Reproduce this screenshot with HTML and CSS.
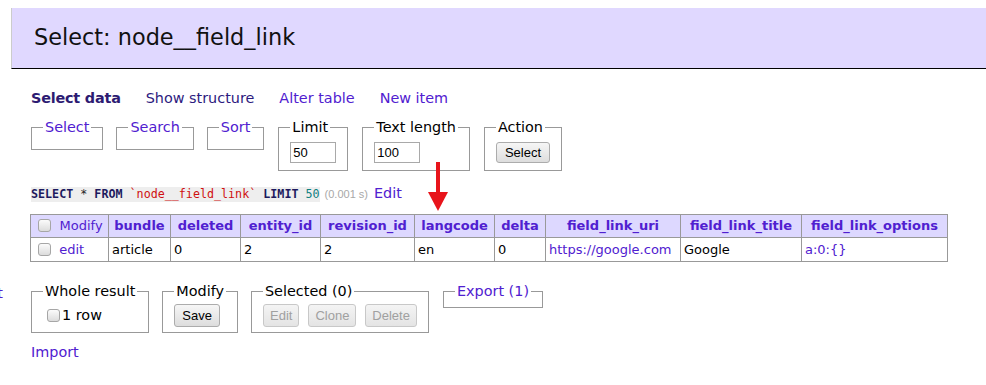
FILE: index.html
```html
<!DOCTYPE html>
<html lang="en">
<head>
    <meta charset="UTF-8">
    <title>Select: node__field_link - Adminer</title>
    <link rel="stylesheet" href="styles.css">
</head>
<body>
    <div class="page">
        <aside class="sidebar">
            <a href="#" class="side-link">Export</a>
        </aside>

        <main class="content">
            <h2 class="title">Select: node__field_link</h2>

            <p class="links">
                <a href="#" class="active">Select data</a>
                <a href="#" class="visited">Show structure</a>
                <a href="#">Alter table</a>
                <a href="#">New item</a>
            </p>

            <form class="filters">
                <fieldset><legend><a href="#">Select</a></legend></fieldset>
                <fieldset><legend><a href="#">Search</a></legend></fieldset>
                <fieldset><legend><a href="#">Sort</a></legend></fieldset>
                <fieldset class="wide-gap">
                    <legend>Limit</legend>
                    <input type="text" class="small-input" value="50">
                </fieldset>
                <fieldset class="wide-gap">
                    <legend>Text length</legend>
                    <input type="text" class="small-input" value="100">
                </fieldset>
                <fieldset class="wide-gap">
                    <legend>Action</legend>
                    <button type="button" class="btn">Select</button>
                </fieldset>
            </form>

            <p class="query">
                <code class="sql"><b class="kw">SELECT</b> * <b class="kw">FROM</b> <span class="ident">`node__field_link`</span> <b class="kw">LIMIT</b> <span class="num">50</span></code>
                <span class="time">(0.001 s)</span>
                <a href="#">Edit</a>
            </p>

            <table class="results">
                <colgroup>
                    <col class="c-modify">
                    <col class="c-bundle">
                    <col class="c-deleted">
                    <col class="c-entity">
                    <col class="c-revision">
                    <col class="c-lang">
                    <col class="c-delta">
                    <col class="c-uri">
                    <col class="c-title">
                    <col class="c-options">
                </colgroup>
                <thead>
                    <tr>
                        <th class="check-col"><input type="checkbox" class="check"> <a href="#" class="plain">Modify</a></th>
                        <th><a href="#">bundle</a></th>
                        <th><a href="#">deleted</a></th>
                        <th><a href="#">entity_id</a></th>
                        <th><a href="#">revision_id</a></th>
                        <th><a href="#">langcode</a></th>
                        <th><a href="#">delta</a></th>
                        <th><a href="#">field_link_uri</a></th>
                        <th><a href="#">field_link_title</a></th>
                        <th><a href="#">field_link_options</a></th>
                    </tr>
                </thead>
                <tbody>
                    <tr>
                        <td class="check-col"><input type="checkbox" class="check"> <a href="#">edit</a></td>
                        <td>article</td>
                        <td>0</td>
                        <td>2</td>
                        <td>2</td>
                        <td>en</td>
                        <td>0</td>
                        <td><a href="#">https://google.com</a></td>
                        <td>Google</td>
                        <td><a href="#">a:0:{}</a></td>
                    </tr>
                </tbody>
            </table>

            <div class="actions">
                <fieldset>
                    <legend>Whole result</legend>
                    <label class="row-count"><input type="checkbox" class="check">1 row</label>
                </fieldset>
                <fieldset>
                    <legend>Modify</legend>
                    <button type="button" class="btn">Save</button>
                </fieldset>
                <fieldset>
                    <legend>Selected (0)</legend>
                    <div class="btn-row">
                        <button type="button" class="btn" disabled>Edit</button>
                        <button type="button" class="btn" disabled>Clone</button>
                        <button type="button" class="btn" disabled>Delete</button>
                    </div>
                </fieldset>
                <fieldset class="empty">
                    <legend><a href="#">Export (1)</a></legend>
                </fieldset>
            </div>

            <p class="import"><a href="#">Import</a></p>
        </main>
    </div>

    <svg class="arrow" width="24" height="52" viewBox="0 0 24 52">
        <rect x="10" y="0" width="4" height="31" fill="#e8141b"/>
        <polygon points="2,30 22,30 12,49" fill="#e8141b"/>
    </svg>
</body>
</html>
```

FILE: styles.css
```css
html, body {
    margin: 0;
    background-color: #ffffff;
}
body {
    position: relative;
    padding-top: 8px;
    font: 14.4px/18px "DejaVu Sans", Verdana, sans-serif;
    color: #000000;
}
a {
    color: #5020d0;
    text-decoration: none;
}
.page {
    display: flex;
}
.sidebar {
    width: 11px;
    flex-shrink: 0;
    overflow: hidden;
    display: flex;
    flex-direction: column;
    align-items: flex-end;
}
.side-link {
    margin-top: 276px;
    margin-right: 8px;
    white-space: nowrap;
}
.content {
    flex: 1;
    padding-left: 20px;
}
.title {
    margin: 0 0 0 -20px;
    padding: 16px 22px 17px;
    font-size: 22.4px;
    font-weight: normal;
    line-height: 27px;
    color: #111111;
    background-color: #e0d8ff;
    border-left: 1px solid #cccccc;
    border-bottom: 1px solid #000000;
}
.links {
    display: flex;
    gap: 25px;
    margin: 20px 0 0;
}
.links .active {
    font-weight: bold;
    color: #2d1b72;
    letter-spacing: -0.2px;
}
.links .visited {
    color: #2d1b80;
}
.filters, .actions {
    display: flex;
    align-items: flex-start;
    gap: 13px;
    margin: 11px 0 0;
}
.filters .wide-gap {
    margin-left: 1px;
}
.actions {
    margin-top: 20px;
}
fieldset {
    margin: 0;
    padding: 6px 11px 7px;
    border: 1px solid #999999;
    min-width: 0;
}
legend {
    padding: 0 2px;
}
.actions fieldset {
    padding: 4px 11px 5px;
}
.actions fieldset.empty {
    margin-left: 1px;
    padding-bottom: 3px;
}
.small-input {
    display: block;
    box-sizing: border-box;
    width: 46px;
    height: 21px;
    margin: 0;
    padding: 1px 2px;
    font: 13px "Liberation Sans", Arial, sans-serif;
    border: 1px solid #a9a9a9;
}
.btn {
    display: block;
    box-sizing: border-box;
    height: 23px;
    margin: 0;
    padding: 0 7px;
    font: 13px "Liberation Sans", Arial, sans-serif;
    color: #000000;
    background: linear-gradient(#f6f6f6, #dddddd);
    border: 1px solid #acacac;
    border-radius: 3px;
}
.filters .btn {
    height: 21px;
    padding: 0 8px;
}
.btn:disabled {
    padding: 0 6px;
    color: #a0a0a0;
    border-color: #c8c8c8;
    background: linear-gradient(#f4f4f4, #e4e4e4);
}
.btn-row {
    display: flex;
    gap: 9px;
}
.query {
    margin: 13px 0 0;
    display: flex;
    align-items: baseline;
    gap: 5px;
}
.query a {
    margin-left: 1px;
}
.sql {
    font: 11.7px/15px "DejaVu Sans Mono", monospace;
    background-color: #eeeeee;
    color: #222222;
}
.sql .kw {
    color: #1d1a5e;
}
.sql .ident {
    color: #d01010;
}
.sql .num {
    color: #108080;
}
.time {
    font: 11px "Liberation Sans", Arial, sans-serif;
    color: #a8a8a8;
}
.results {
    margin: 12px 0 0 -1px;
    width: 917px;
    table-layout: fixed;
    border-collapse: collapse;
    font-size: 13px;
    line-height: 16px;
}
.c-modify { width: 78px; }
.c-bundle { width: 62px; }
.c-deleted { width: 70px; }
.c-entity { width: 80px; }
.c-revision { width: 94px; }
.c-lang { width: 80px; }
.c-delta { width: 51px; }
.c-uri { width: 135px; }
.c-title { width: 121px; }
.c-options { width: 146px; }
.results th, .results td {
    border: 1px solid #999999;
    white-space: nowrap;
    overflow: hidden;
}
.results th {
    padding: 3px 0;
    background-color: #ddd8ff;
    text-align: center;
}
.results td {
    padding: 4px 3px 3px;
}
.results .check-col {
    text-align: left;
    padding-left: 7px;
}
.results th a {
    color: #5020d0;
}
.results th a.plain {
    font-weight: normal;
}
.check {
    appearance: none;
    display: inline-block;
    vertical-align: -2px;
    width: 13px;
    height: 13px;
    margin: 0 4px 0 0;
    border: 1px solid #a6a6a6;
    border-radius: 3px;
    background: linear-gradient(#fbfbfb, #dcdcdc);
}
.row-count {
    display: block;
    padding: 2px 0 3px 4px;
}
.row-count .check {
    margin-right: 2px;
}
.import {
    margin: 10px 0 0;
}
.arrow {
    position: absolute;
    left: 426px;
    top: 162px;
}
```
